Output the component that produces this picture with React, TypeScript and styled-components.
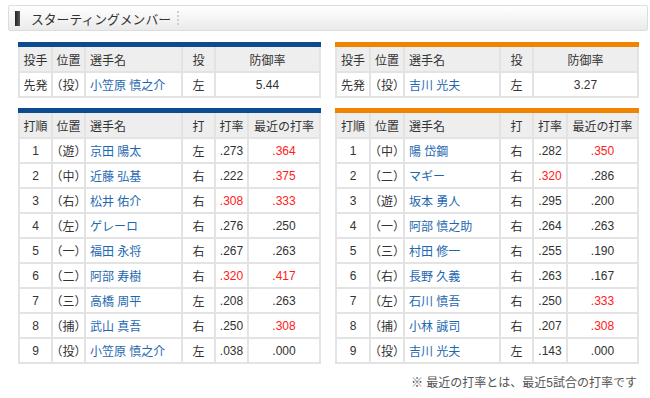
import React from 'react'
import styled, { createGlobalStyle } from 'styled-components'

const GlobalStyle = createGlobalStyle`
    body {
        margin: 0;
        background: #fff;
        font-family: 'Liberation Sans', 'Noto Sans CJK JP', sans-serif;
        color: #333;
    }
`

const Page = styled.div`
    width: 640px;
    padding: 5px 2px 0 8px;
`

const TitleBar = styled.div`
    display: flex;
    align-items: center;
    height: 24px;
    padding-left: 6px;
    border: 1px solid #dcdcdc;
    border-radius: 2px;
    background: linear-gradient(#ffffff, #f5f5f5 50%, #eaeaea);
`

const TitleMark = styled.span`
    width: 5px;
    height: 15px;
    background: linear-gradient(90deg, #222, #5a5a5a);
`

const TitleText = styled.h2`
    margin: 0 0 0 11px;
    font-size: 12.8px;
    font-weight: normal;
    color: #333;
`

const TitleDivider = styled.span`
    width: 0;
    height: 14px;
    margin-left: 6px;
    border-left: 2px dotted #cfcfcf;
`

const Content = styled.div`
    padding: 11px 9px 0 10px;
`

const Grid = styled.div`
    display: grid;
    grid-template-columns: 303px 304px;
    column-gap: 14px;
    row-gap: 10px;
`

const Card = styled.div<{ $accent: string }>`
    border-top: 5px solid ${(p) => p.$accent};
`

const Table = styled.table`
    width: 100%;
    border-collapse: collapse;
    table-layout: fixed;
    font-size: 12px;
    tr {
        height: 25px;
    }
`

const Th = styled.th`
    padding: 0;
    border: 2px solid #e3e3e3;
    border-top: 0;
    background: #eeeeee;
    font-weight: normal;
    text-align: center;
    white-space: nowrap;
`

const NameTh = styled(Th)`
    text-align: left;
    padding-left: 4px;
`

const Td = styled.td<{ $hot?: boolean }>`
    padding: 0;
    border: 2px solid #e3e3e3;
    text-align: center;
    white-space: nowrap;
    color: ${(p) => (p.$hot ? '#ff2020' : '#333')};
`

const PosTd = styled(Td)`
    font-feature-settings: 'halt';
`

const NameTd = styled(Td)`
    text-align: left;
    padding-left: 4px;
    color: #1e68b0;
`

const Note = styled.p`
    margin: 9px 2px 0 0;
    text-align: right;
    font-size: 12px;
    color: #555;
`

type Pitcher = { pos: string; name: string; hand: string; era: string }
type Batter = { order: number; pos: string; name: string; hand: string; avg: string; recent: string }

const pitchers: Pitcher[] = [
    { pos: '投', name: '小笠原 慎之介', hand: '左', era: '5.44' },
    { pos: '投', name: '吉川 光夫', hand: '左', era: '3.27' },
]

const dragons: Batter[] = [
    { order: 1, pos: '遊', name: '京田 陽太', hand: '左', avg: '.273', recent: '.364' },
    { order: 2, pos: '中', name: '近藤 弘基', hand: '右', avg: '.222', recent: '.375' },
    { order: 3, pos: '右', name: '松井 佑介', hand: '右', avg: '.308', recent: '.333' },
    { order: 4, pos: '左', name: 'ゲレーロ', hand: '右', avg: '.276', recent: '.250' },
    { order: 5, pos: '一', name: '福田 永将', hand: '右', avg: '.267', recent: '.263' },
    { order: 6, pos: '二', name: '阿部 寿樹', hand: '右', avg: '.320', recent: '.417' },
    { order: 7, pos: '三', name: '高橋 周平', hand: '左', avg: '.208', recent: '.263' },
    { order: 8, pos: '捕', name: '武山 真吾', hand: '右', avg: '.250', recent: '.308' },
    { order: 9, pos: '投', name: '小笠原 慎之介', hand: '左', avg: '.038', recent: '.000' },
]

const giants: Batter[] = [
    { order: 1, pos: '中', name: '陽 岱鋼', hand: '右', avg: '.282', recent: '.350' },
    { order: 2, pos: '二', name: 'マギー', hand: '右', avg: '.320', recent: '.286' },
    { order: 3, pos: '遊', name: '坂本 勇人', hand: '右', avg: '.295', recent: '.200' },
    { order: 4, pos: '一', name: '阿部 慎之助', hand: '右', avg: '.264', recent: '.263' },
    { order: 5, pos: '三', name: '村田 修一', hand: '右', avg: '.255', recent: '.190' },
    { order: 6, pos: '右', name: '長野 久義', hand: '右', avg: '.263', recent: '.167' },
    { order: 7, pos: '左', name: '石川 慎吾', hand: '右', avg: '.250', recent: '.333' },
    { order: 8, pos: '捕', name: '小林 誠司', hand: '右', avg: '.207', recent: '.308' },
    { order: 9, pos: '投', name: '吉川 光夫', hand: '左', avg: '.143', recent: '.000' },
]

// .300 and up is shown in red
const isHot = (v: string) => parseFloat(v) >= 0.3

const colWidths = (wide: boolean) =>
    wide ? [34, 34, 96, 33, 34] : [33, 33, 97, 33, 33]

const PitcherTable = ({ p, accent, wide }: { p: Pitcher; accent: string; wide: boolean }) => {
    const w = colWidths(wide)
    return (
        <Card $accent={accent}>
            <Table>
                <colgroup>
                    <col style={{ width: w[0] }} />
                    <col style={{ width: w[1] }} />
                    <col style={{ width: w[2] }} />
                    <col style={{ width: w[3] }} />
                    <col />
                </colgroup>
                <thead>
                    <tr>
                        <Th>投手</Th>
                        <Th>位置</Th>
                        <NameTh>選手名</NameTh>
                        <Th>投</Th>
                        <Th>防御率</Th>
                    </tr>
                </thead>
                <tbody>
                    <tr>
                        <Td>先発</Td>
                        <PosTd>（{p.pos}）</PosTd>
                        <NameTd>{p.name}</NameTd>
                        <Td>{p.hand}</Td>
                        <Td>{p.era}</Td>
                    </tr>
                </tbody>
            </Table>
        </Card>
    )
}

const BatterTable = ({ rows, accent, wide }: { rows: Batter[]; accent: string; wide: boolean }) => {
    const w = colWidths(wide)
    return (
        <Card $accent={accent}>
            <Table>
                <colgroup>
                    {w.map((cw, i) => (
                        <col key={i} style={{ width: cw }} />
                    ))}
                    <col />
                </colgroup>
                <thead>
                    <tr>
                        <Th>打順</Th>
                        <Th>位置</Th>
                        <NameTh>選手名</NameTh>
                        <Th>打</Th>
                        <Th>打率</Th>
                        <Th>最近の打率</Th>
                    </tr>
                </thead>
                <tbody>
                    {rows.map((b) => (
                        <tr key={b.order}>
                            <Td>{b.order}</Td>
                            <PosTd>（{b.pos}）</PosTd>
                            <NameTd>{b.name}</NameTd>
                            <Td>{b.hand}</Td>
                            <Td $hot={isHot(b.avg)}>{b.avg}</Td>
                            <Td $hot={isHot(b.recent)}>{b.recent}</Td>
                        </tr>
                    ))}
                </tbody>
            </Table>
        </Card>
    )
}

const App = () => (
    <>
        <GlobalStyle />
        <Page>
            <TitleBar>
                <TitleMark />
                <TitleText>スターティングメンバー</TitleText>
                <TitleDivider />
            </TitleBar>
            <Content>
                <Grid>
                    <PitcherTable p={pitchers[0]} accent='#0d4b91' wide={false} />
                    <PitcherTable p={pitchers[1]} accent='#f08300' wide />
                    <BatterTable rows={dragons} accent='#0d4b91' wide={false} />
                    <BatterTable rows={giants} accent='#f08300' wide />
                </Grid>
                <Note>※ 最近の打率とは、最近5試合の打率です</Note>
            </Content>
        </Page>
    </>
)

export default App
